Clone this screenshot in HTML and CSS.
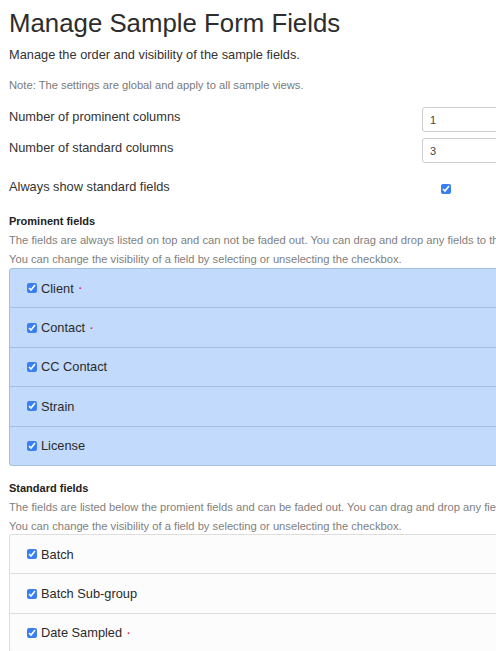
FILE: index.html
```html
<!DOCTYPE html>
<html>
<head>
<meta charset="utf-8">
<link rel="stylesheet" href="styles.css">
</head>
<body>
<div class="page">
  <h1 class="title">Manage Sample Form Fields</h1>
  <p class="lead">Manage the order and visibility of the sample fields.</p>
  <p class="note">Note: The settings are global and apply to all sample views.</p>

  <div class="form">
    <label class="form-label">Number of prominent columns</label>
    <div class="form-field"><input class="num" type="text" value="1"></div>
    <label class="form-label">Number of standard columns</label>
    <div class="form-field"><input class="num" type="text" value="3"></div>
    <label class="form-label check-label">Always show standard fields</label>
    <div class="form-field check-field"><input class="cb" type="checkbox" checked></div>
  </div>

  <h5 class="section-title first">Prominent fields</h5>
  <p class="help">The fields are always listed on top and can not be faded out. You can drag and drop any fields to the standard fields section.</p>
  <p class="help">You can change the visibility of a field by selecting or unselecting the checkbox.</p>
  <ul class="list prominent">
    <li class="item"><input class="cb" type="checkbox" checked><span class="name">Client</span><span class="req">·</span></li>
    <li class="item"><input class="cb" type="checkbox" checked><span class="name">Contact</span><span class="req">·</span></li>
    <li class="item"><input class="cb" type="checkbox" checked><span class="name">CC Contact</span></li>
    <li class="item"><input class="cb" type="checkbox" checked><span class="name">Strain</span></li>
    <li class="item"><input class="cb" type="checkbox" checked><span class="name">License</span></li>
  </ul>

  <h5 class="section-title">Standard fields</h5>
  <p class="help">The fields are listed below the promient fields and can be faded out. You can drag and drop any fields to the prominent fields section.</p>
  <p class="help">You can change the visibility of a field by selecting or unselecting the checkbox.</p>
  <ul class="list standard">
    <li class="item"><input class="cb" type="checkbox" checked><span class="name">Batch</span></li>
    <li class="item"><input class="cb" type="checkbox" checked><span class="name">Batch Sub-group</span></li>
    <li class="item"><input class="cb" type="checkbox" checked><span class="name">Date Sampled</span><span class="req">·</span></li>
  </ul>
</div>
</body>
</html>
```
FILE: styles.css
```css
html, body {
  margin: 0;
  padding: 0;
  overflow: hidden;
  background: #fff;
}
body {
  font-family: "Liberation Sans", Arial, sans-serif;
  color: #333;
  font-size: 12.8px;
}
.page {
  width: 620px;
  padding: 0 0 0 9px;
}
.title {
  font-size: 25.8px;
  font-weight: 400;
  margin: 6px 0 0 0;
  line-height: 34px;
  color: #2d2d2d;
}
.lead {
  margin: 6px 0 0 0;
  font-size: 12.8px;
  line-height: 18px;
}
.note {
  margin: 13px 0 0 0;
  font-size: 11.2px;
  line-height: 16px;
  color: #7a7a7a;
}
.form {
  display: grid;
  grid-template-columns: 413px 120px;
  row-gap: 7px;
  margin-top: 15px;
}
.form-label {
  font-size: 12.8px;
  line-height: 16px;
  padding-top: 1px;
}
.form-field {
  margin-top: -1px;
}
.num {
  box-sizing: border-box;
  width: 120px;
  height: 25px;
  border: 1px solid #ccc;
  border-radius: 3px;
  padding: 0 7px;
  font-family: "Liberation Sans", Arial, sans-serif;
  font-size: 11px;
  color: #444;
  margin: 0;
  display: block;
}
.check-label {
  padding-top: 9px;
}
.check-field {
  margin-top: 0;
  padding-top: 12px;
  padding-left: 19px;
}
.cb {
  width: 10px;
  height: 10px;
  margin: 0;
  accent-color: #3a7ff2;
}
.section-title {
  font-size: 11px;
  font-weight: 700;
  margin: 15px 0 0 0;
  line-height: 14px;
  color: #222;
}
.section-title.first {
  margin-top: 17px;
}
.help {
  margin: 5px 0 0 0;
  font-size: 11.2px;
  line-height: 14px;
  color: #808080;
  white-space: nowrap;
}
.list {
  list-style: none;
  margin: 2px 0 0 0;
  padding: 0;
}
.list.standard {
  margin-top: 1px;
}
.item {
  display: flex;
  align-items: center;
  height: 38.4px;
  padding-left: 17px;
  font-size: 12.8px;
  border: 1px solid;
  border-top: 0;
}
.item:first-child {
  border-top: 1px solid;
  border-radius: 3px 0 0 0;
  border-top-color: inherit;
  height: 38.4px;
}
.item:last-child {
  border-radius: 0 0 0 3px;
}
.prominent .item {
  background: #c2dafc;
  border-color: #a6bfdf;
}
.standard .item {
  background: #fcfcfc;
  border-color: #dedede;
}
.name {
  margin-left: 4px;
  color: #2a2a2a;
}
.req {
  color: #e0314b;
  font-size: 11px;
  font-weight: 700;
  margin-left: 5px;
}
```
